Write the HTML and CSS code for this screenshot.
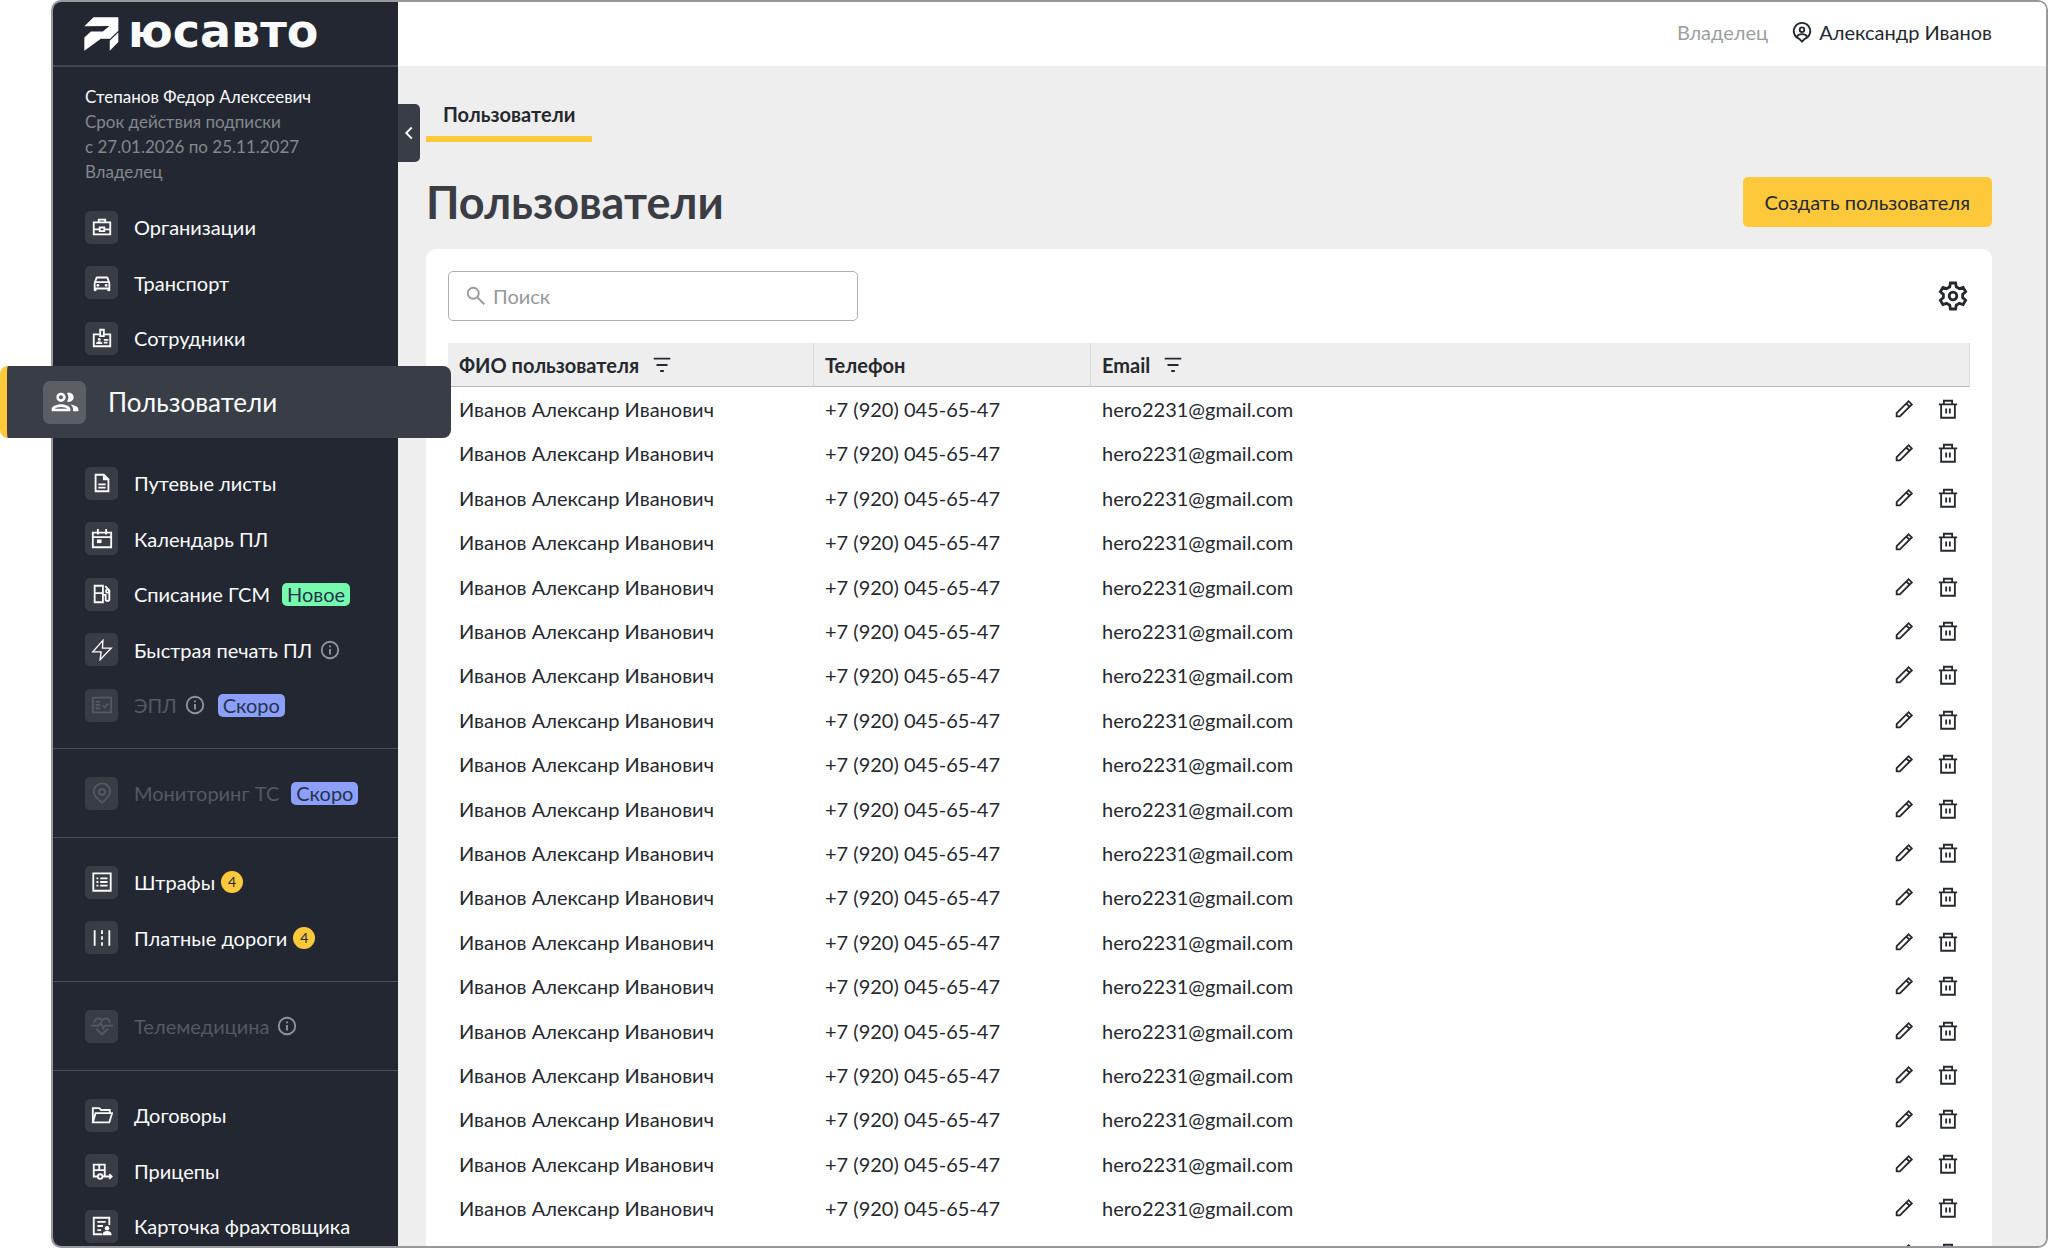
FILE: index.html
```
<!DOCTYPE html>
<html lang="ru">
<head>
    <meta charset="UTF-8">
    <meta name="viewport" content="width=device-width, initial-scale=1.0">
    <title>ЮСАВТО — Пользователи</title>
    <link rel="stylesheet" href="styles.css">
</head>
<body>
    <svg class="sprite" aria-hidden="true">
        <symbol id="i-case" viewBox="0 0 24 24"><path d="M3 7h18v13H3zM8.500 7V4h7v3M3 14.500h6M15 14.500h6M9.500 12.500h5v4h-5z"/></symbol>
        <symbol id="i-car" viewBox="0 0 24 24"><path class="fill" d="M18.920 6.010C18.720 5.420 18.160 5 17.500 5h-11c-.66 0-1.210.42-1.420 1.010L3 12v8c0 .55.45 1 1 1h1c.55 0 1-.45 1-1v-1h12v1c0 .55.45 1 1 1h1c.55 0 1-.45 1-1v-8l-2.080-5.990zM6.850 7h10.290l1.080 3.110H5.770L6.850 7zM19 17H5v-5h14v5z"/><circle class="fill" cx="7.500" cy="14.500" r="1.500"/><circle class="fill" cx="16.500" cy="14.500" r="1.500"/></symbol>
        <symbol id="i-badge" viewBox="0 0 24 24"><path d="M10 8H3v13h18V8h-7M10 3h4v7h-4zM14 14h5M14 17h4"/><circle class="fill" cx="9" cy="13.500" r="1.500"/><path class="fill" d="M5.500 18.500c0-2 1.500-3 3.500-3s3.500 1 3.500 3z"/></symbol>
        <symbol id="i-people" viewBox="0 0 24 24"><path class="fill" d="M9 13.750c-2.340 0-7 1.170-7 3.500V19h14v-1.750c0-2.330-4.660-3.500-7-3.500zM4.340 17c.84-.58 2.870-1.250 4.660-1.250s3.820.67 4.660 1.250H4.340zM9 12c1.930 0 3.500-1.570 3.500-3.500S10.930 5 9 5 5.500 6.570 5.500 8.500 7.070 12 9 12zm0-5c.83 0 1.500.67 1.500 1.500S9.830 10 9 10s-1.500-.67-1.500-1.500S8.170 7 9 7zm7.040 6.810c1.160.84 1.960 1.960 1.960 3.440V19h4v-1.750c0-2.020-3.500-3.170-5.960-3.440zM15 12c1.930 0 3.500-1.570 3.500-3.500S16.930 5 15 5c-.54 0-1.040.13-1.500.35.63.89 1 1.980 1 3.150s-.37 2.260-1 3.150c.46.22.96.35 1.500.35z"/></symbol>
        <symbol id="i-doc" viewBox="0 0 24 24"><path d="M5 3h9l5 5v13H5zM8 13.500h8M8 17h8"/><path class="fill" d="M13 3l6 6h-6z"/></symbol>
        <symbol id="i-calendar" viewBox="0 0 24 24"><path d="M2 5h20v16H2zM2 10h20M7.500 1v6M16.500 1v6"/><path class="fill" d="M6.500 12.500h5v4h-5z"/></symbol>
        <symbol id="i-fuel" viewBox="0 0 24 24"><path d="M4 3h9v18H4zM4 11h9M13 13h3v5c0 2 4 2 4 0V8L15.500 3.500"/><circle cx="18" cy="9" r="1.700"/></symbol>
        <symbol id="i-bolt" viewBox="0 0 24 24"><path d="M13 1.500L2 14h9l-1 8.500L22 10h-9.500z"/></symbol>
        <symbol id="i-check" viewBox="0 0 24 24"><path d="M2 4h20v16H2zM5 8.500h5M5 12h5M5 15.500h5M13 12.500l2 2 4-4"/></symbol>
        <symbol id="i-pin" viewBox="0 0 24 24"><path d="M12 22.500c-5-4-9-7.500-9-12a9 9 0 0 1 18 0c0 4.500-4 8-9 12z"/><circle cx="12" cy="11" r="3.200"/></symbol>
        <symbol id="i-list" viewBox="0 0 24 24"><path d="M2.500 2.500h19v19h-19zM6 8h2M10 8h8M6 12h2M10 12h8M6 16h2M10 16h8"/></symbol>
        <symbol id="i-road" viewBox="0 0 24 24"><path d="M4 3.500v17M20 3.500v17M12 3.500v4M12 10v4M12 16.500v4"/></symbol>
        <symbol id="i-heart" viewBox="0 0 24 24"><path d="M3.500 8.500C3.500 3 10 2.500 12 6c2-3.500 8.500-3 8.500 2.500M0 11.500h8.500l2-3 3 6 2-3H24M5.500 15l6.500 6 6.500-6"/></symbol>
        <symbol id="i-folder" viewBox="0 0 24 24"><path d="M2 20V4.500h7l2 2h9.500v3M2 20l3-10h18l-3 10z"/></symbol>
        <symbol id="i-trailer" viewBox="0 0 24 24"><path d="M7 18H3V5h12v13h-2M3 11h12M9 5v6M15 18h7M20 15.500l2.500 2.500-2.500 2.500"/><circle cx="10" cy="18" r="2.500"/></symbol>
        <symbol id="i-card" viewBox="0 0 24 24"><path d="M12 21H3V3h17v8M7 7.500h9M7 12h6M7 16.500h4"/><circle class="fill" cx="17.500" cy="14.500" r="2.500"/><path class="fill" d="M12.500 22c0-3 2-4.500 5-4.500s5 1.500 5 4.500z"/></symbol>
        <symbol id="i-info" viewBox="0 0 24 24"><circle cx="12" cy="12" r="9"/><path d="M12 11v6M12 7v2"/></symbol>
        <symbol id="i-user" viewBox="0 0 24 24"><path d="M12 22.500l-3-3A9 9 0 1 1 15 19.500zM6.500 17c2-3.500 9-3.500 11 0"/><circle cx="12" cy="9.500" r="2.500"/></symbol>
        <symbol id="i-search" viewBox="0 0 24 24"><circle cx="9" cy="9" r="6"/><path d="M13.500 13.500l7.500 7.500"/></symbol>
        <symbol id="i-gear" viewBox="0 0 24 24"><path d="M9.700 5.500L10.200 2.800h3.600L14.300 5.500L16.500 6.800L19.100 5.900L20.900 9L18.800 10.800V13.200L20.900 15L19.100 18.100L16.500 17.200L14.300 18.500L13.800 21.200H10.200L9.700 18.500L7.500 17.200L4.900 18.100L3.100 15L5.200 13.200V10.800L3.100 9L4.900 5.900L7.500 6.800z"/><circle cx="12" cy="12" r="2.700"/></symbol>
        <symbol id="i-filter" viewBox="0 0 24 24"><path d="M3 5h18M6 12h12M10 18.500h4"/></symbol>
        <symbol id="i-pencil" viewBox="0 0 24 24"><path d="M4 20v-3.500L17 3.500l3.500 3.500L7.500 20zM14.500 6l3.500 3.500"/></symbol>
        <symbol id="i-trash" viewBox="0 0 24 24"><path d="M2 7h20M4.500 7v14.500h15V7M7.500 6.500V3h9v3.500M10 11.500v5.500M14 11.500v5.500"/></symbol>
        <symbol id="i-left" viewBox="0 0 24 24"><path d="M15 6l-6 6 6 6"/></symbol>
    </svg>

    <div class="frame">
        <aside class="sidebar">
            <a class="logo" href="#">
                <svg class="logo-mark" viewBox="20 24 104 103"><path d="M20 52L48 25H123V66L98 90H70L20 126V86L40 68H76L96 51z"/><path d="M123 71V100L97 126V96z"/></svg>
                <span class="logo-text">юсавто</span>
            </a>
            <div class="account">
                <div class="account-name">Степанов Федор Алексеевич</div>
                <div>Срок действия подписки</div>
                <div>с 27.01.2026 по 25.11.2027</div>
                <div>Владелец</div>
            </div>
            <nav>
                <ul class="menu">
                    <li><a href="#"><span class="tile"><svg class="icon"><use href="#i-case"/></svg></span>Организации</a></li>
                    <li><a href="#"><span class="tile"><svg class="icon"><use href="#i-car"/></svg></span>Транспорт</a></li>
                    <li><a href="#"><span class="tile"><svg class="icon"><use href="#i-badge"/></svg></span>Сотрудники</a></li>
                    <li class="active"><a href="#"><span class="tile"><svg class="icon"><use href="#i-people"/></svg></span>Пользователи</a></li>
                    <li><a href="#"><span class="tile"><svg class="icon"><use href="#i-doc"/></svg></span>Путевые листы</a></li>
                    <li><a href="#"><span class="tile"><svg class="icon"><use href="#i-calendar"/></svg></span>Календарь ПЛ</a></li>
                    <li><a href="#"><span class="tile"><svg class="icon"><use href="#i-fuel"/></svg></span>Списание ГСМ<span class="tag tag-new">Новое</span></a></li>
                    <li><a href="#"><span class="tile"><svg class="icon thin"><use href="#i-bolt"/></svg></span>Быстрая печать ПЛ<svg class="icon info"><use href="#i-info"/></svg></a></li>
                    <li class="disabled"><a href="#"><span class="tile"><svg class="icon"><use href="#i-check"/></svg></span>ЭПЛ<svg class="icon info"><use href="#i-info"/></svg><span class="tag tag-soon">Скоро</span></a></li>
                </ul>
                <ul class="menu">
                    <li class="disabled"><a href="#"><span class="tile"><svg class="icon"><use href="#i-pin"/></svg></span>Мониторинг ТС<span class="tag tag-soon">Скоро</span></a></li>
                </ul>
                <ul class="menu">
                    <li><a href="#"><span class="tile"><svg class="icon"><use href="#i-list"/></svg></span>Штрафы<span class="count">4</span></a></li>
                    <li><a href="#"><span class="tile"><svg class="icon"><use href="#i-road"/></svg></span>Платные дороги<span class="count">4</span></a></li>
                </ul>
                <ul class="menu">
                    <li class="disabled"><a href="#"><span class="tile"><svg class="icon"><use href="#i-heart"/></svg></span>Телемедицина<svg class="icon info"><use href="#i-info"/></svg></a></li>
                </ul>
                <ul class="menu">
                    <li><a href="#"><span class="tile"><svg class="icon"><use href="#i-folder"/></svg></span>Договоры</a></li>
                    <li><a href="#"><span class="tile"><svg class="icon"><use href="#i-trailer"/></svg></span>Прицепы</a></li>
                    <li><a href="#"><span class="tile"><svg class="icon"><use href="#i-card"/></svg></span>Карточка фрахтовщика</a></li>
                </ul>
            </nav>
            <button class="collapse" type="button" aria-label="Свернуть меню"><svg class="icon"><use href="#i-left"/></svg></button>
        </aside>

        <div class="page">
            <header class="topbar">
                <span class="role">Владелец</span>
                <a class="user" href="#"><svg class="icon"><use href="#i-user"/></svg>Александр Иванов</a>
            </header>
            <main class="content">
                <a class="tab" href="#">Пользователи</a>
                <div class="title-row">
                    <h1>Пользователи</h1>
                    <button class="create" type="button">Создать пользователя</button>
                </div>
                <section class="card">
                    <div class="toolbar">
                        <label class="search">
                            <svg class="icon"><use href="#i-search"/></svg>
                            <input type="search" placeholder="Поиск" aria-label="Поиск">
                        </label>
                        <button class="settings" type="button" aria-label="Настройки"><svg><use href="#i-gear"/></svg></button>
                    </div>
                    <table>
                        <thead>
                            <tr>
                                <th class="col-name"><div class="head">ФИО пользователя<svg class="icon"><use href="#i-filter"/></svg></div></th>
                                <th class="col-phone"><div class="head">Телефон</div></th>
                                <th><div class="head">Email<svg class="icon"><use href="#i-filter"/></svg></div></th>
                            </tr>
                        </thead>
                        <tbody id="users"></tbody>
                    </table>
                </section>
            </main>
        </div>
    </div>

    <script>
        const users = Array.from({ length: 20 }, () => ({
            name: "Иванов Алексанр Иванович",
            phone: "+7 (920) 045-65-47",
            email: "hero2231@gmail.com"
        }));

        document.getElementById('users').innerHTML = users.map(user => `
            <tr>
                <td>${user.name}</td>
                <td>${user.phone}</td>
                <td>
                    <div class="last">
                        <span>${user.email}</span>
                        <button type="button" aria-label="Изменить"><svg class="icon"><use href="#i-pencil"/></svg></button>
                        <button type="button" aria-label="Удалить"><svg class="icon"><use href="#i-trash"/></svg></button>
                    </div>
                </td>
            </tr>`).join('');
    </script>
</body>
</html>
```
FILE: styles.css
```
* {
    box-sizing: border-box;
}

body {
    margin: 0;
    height: 100vh;
    overflow: hidden;
    background: #fff;
    color: #25292f;
    font-family: Lato, "Open Sans", sans-serif;
    font-size: 20px;
    line-height: 24px;
}

a {
    color: inherit;
    text-decoration: none;
}

button {
    border: none;
    padding: 0;
    background: none;
    color: inherit;
    font: inherit;
    cursor: pointer;
}

.sprite {
    display: none;
}

svg {
    fill: none;
    stroke: currentColor;
    stroke-width: 2;
}

.fill {
    fill: currentColor;
    stroke: none;
}

.icon {
    flex: none;
    width: 22px;
    height: 22px;
}

.thin {
    stroke-width: 1.5;
}

.frame {
    display: flex;
    height: 100vh;
    margin-left: 51px;
    border: 2px solid #96989c;
    border-radius: 10px;
}

/* Sidebar */

.sidebar {
    position: relative;
    z-index: 1;
    flex: none;
    width: 345px;
    background: #232731;
    border-radius: 8px 0 0 8px;
    color: #fafbfc;
}

.logo {
    display: flex;
    align-items: center;
    gap: 9px;
    height: 65px;
    padding-left: 31px;
    border-bottom: 2px solid #434750;
}

.logo-mark {
    width: 35px;
    height: 34px;
    fill: #fff;
    stroke: none;
}

.logo-text {
    font: bold 46px/46px "DejaVu Sans", sans-serif;
    padding-bottom: 6px;
}

.account {
    padding: 17px 32px 15px;
    color: #84878d;
    font-size: 17px;
    line-height: 25px;
}

.account-name {
    color: #fafbfc;
}

.menu {
    list-style: none;
    margin: 0;
    padding: 16px 0;
    border-bottom: 1px solid #4b4f57;
}

.menu:first-child {
    padding: 0 0 15px;
}

.menu:last-child {
    padding-bottom: 0;
    border: none;
}

.menu li {
    height: 56px;
}

.menu li:nth-child(even) {
    height: 55px;
}

.menu a {
    display: flex;
    align-items: center;
    height: 100%;
    padding-left: 32px;
    white-space: nowrap;
}

.tile {
    display: flex;
    align-items: center;
    justify-content: center;
    width: 33px;
    height: 33px;
    margin-right: 16px;
    border-radius: 5px;
    background: #383c45;
}

/* the current item hangs out over both edges of the sidebar */
.menu li.active {
    width: 451px;
    height: 72px;
    margin: 0 0 17px -53px;
    border-left: 7px solid #fdc83a;
    border-radius: 8px;
    background: #393e46;
    font-size: 26px;
}

.active a {
    padding-left: 36px;
}

.active .tile {
    width: 43px;
    height: 43px;
    margin-right: 22px;
    border-radius: 7px;
    background: #5b5f65;
}

.active .icon {
    width: 32px;
    height: 32px;
}

.disabled {
    color: #555960;
}

.info {
    margin-left: 7px;
    color: #92959c;
}

.tag {
    margin-left: 12px;
    padding: 0 5px;
    border-radius: 5px;
    color: #25324b;
    line-height: 23px;
}

.tag-new {
    background: #76fbae;
}

.tag-soon {
    background: #8c9ffb;
}

.count {
    width: 22px;
    margin-left: 6px;
    border-radius: 50%;
    background: #fdc83a;
    color: #25292f;
    font-size: 14px;
    line-height: 22px;
    text-align: center;
}

.collapse {
    position: absolute;
    top: 102px;
    left: 100%;
    display: flex;
    align-items: center;
    justify-content: center;
    width: 22px;
    height: 58px;
    border-radius: 0 5px 5px 0;
    background: #393d46;
    color: #fff;
}

/* Page */

.page {
    display: flex;
    flex-direction: column;
    flex: 1;
    min-width: 0;
    overflow: hidden;
    border-radius: 0 8px 8px 0;
    background: #eee;
}

.topbar {
    display: flex;
    flex: none;
    align-items: center;
    justify-content: flex-end;
    gap: 23px;
    height: 64px;
    padding: 0 54px 4px 0;
    background: #fff;
}

.role {
    color: #9c9ea2;
}

.user {
    display: flex;
    align-items: center;
    gap: 6px;
}

.content {
    padding: 33px 54px 0 28px;
}

.tab {
    display: inline-block;
    padding: 3px 17px 10px;
    border-bottom: 6px solid #fdc83a;
    font-weight: bold;
}

.title-row {
    display: flex;
    align-items: center;
    justify-content: space-between;
    margin: 35px 0 22px;
}

h1 {
    margin: 0;
    color: #3a3d44;
    font-size: 45px;
    line-height: 50px;
}

.create {
    height: 50px;
    padding: 0 22px;
    border-radius: 5px;
    background: #fdc83a;
}

.card {
    padding: 22px 22px 0;
    border-radius: 10px;
    background: #fff;
}

.toolbar {
    display: flex;
    align-items: center;
    justify-content: space-between;
    margin-bottom: 22px;
}

.search {
    display: flex;
    align-items: center;
    gap: 6px;
    width: 410px;
    height: 50px;
    padding: 0 16px;
    border: 1px solid #afb1b4;
    border-radius: 5px;
    color: #96989c;
}

.search input {
    flex: 1;
    min-width: 0;
    border: none;
    padding: 0;
    outline: none;
    background: none;
    font: inherit;
}

.search input::placeholder {
    color: #96989c;
}

.settings svg {
    display: block;
    width: 34px;
    height: 34px;
}

table {
    width: 100%;
    border-collapse: separate;
    border-spacing: 0;
}

th {
    height: 44px;
    padding: 0 11px;
    border-right: 1px solid #d9dadb;
    border-bottom: 1px solid #b8babc;
    background: #eee;
    text-align: left;
}

.col-name {
    width: 366px;
}

.col-phone {
    width: 277px;
}

.head {
    display: flex;
    align-items: center;
    gap: 12px;
}

td {
    height: 44px;
    padding: 0 11px;
}

tr:nth-child(5n + 3) td,
tr:nth-child(5n) td {
    height: 45px;
}

td:last-child {
    padding-right: 0;
}

.last {
    display: flex;
    align-items: center;
}

.last span {
    flex: 1;
}

.last button {
    display: flex;
    align-items: center;
    justify-content: center;
    width: 44px;
}
```
